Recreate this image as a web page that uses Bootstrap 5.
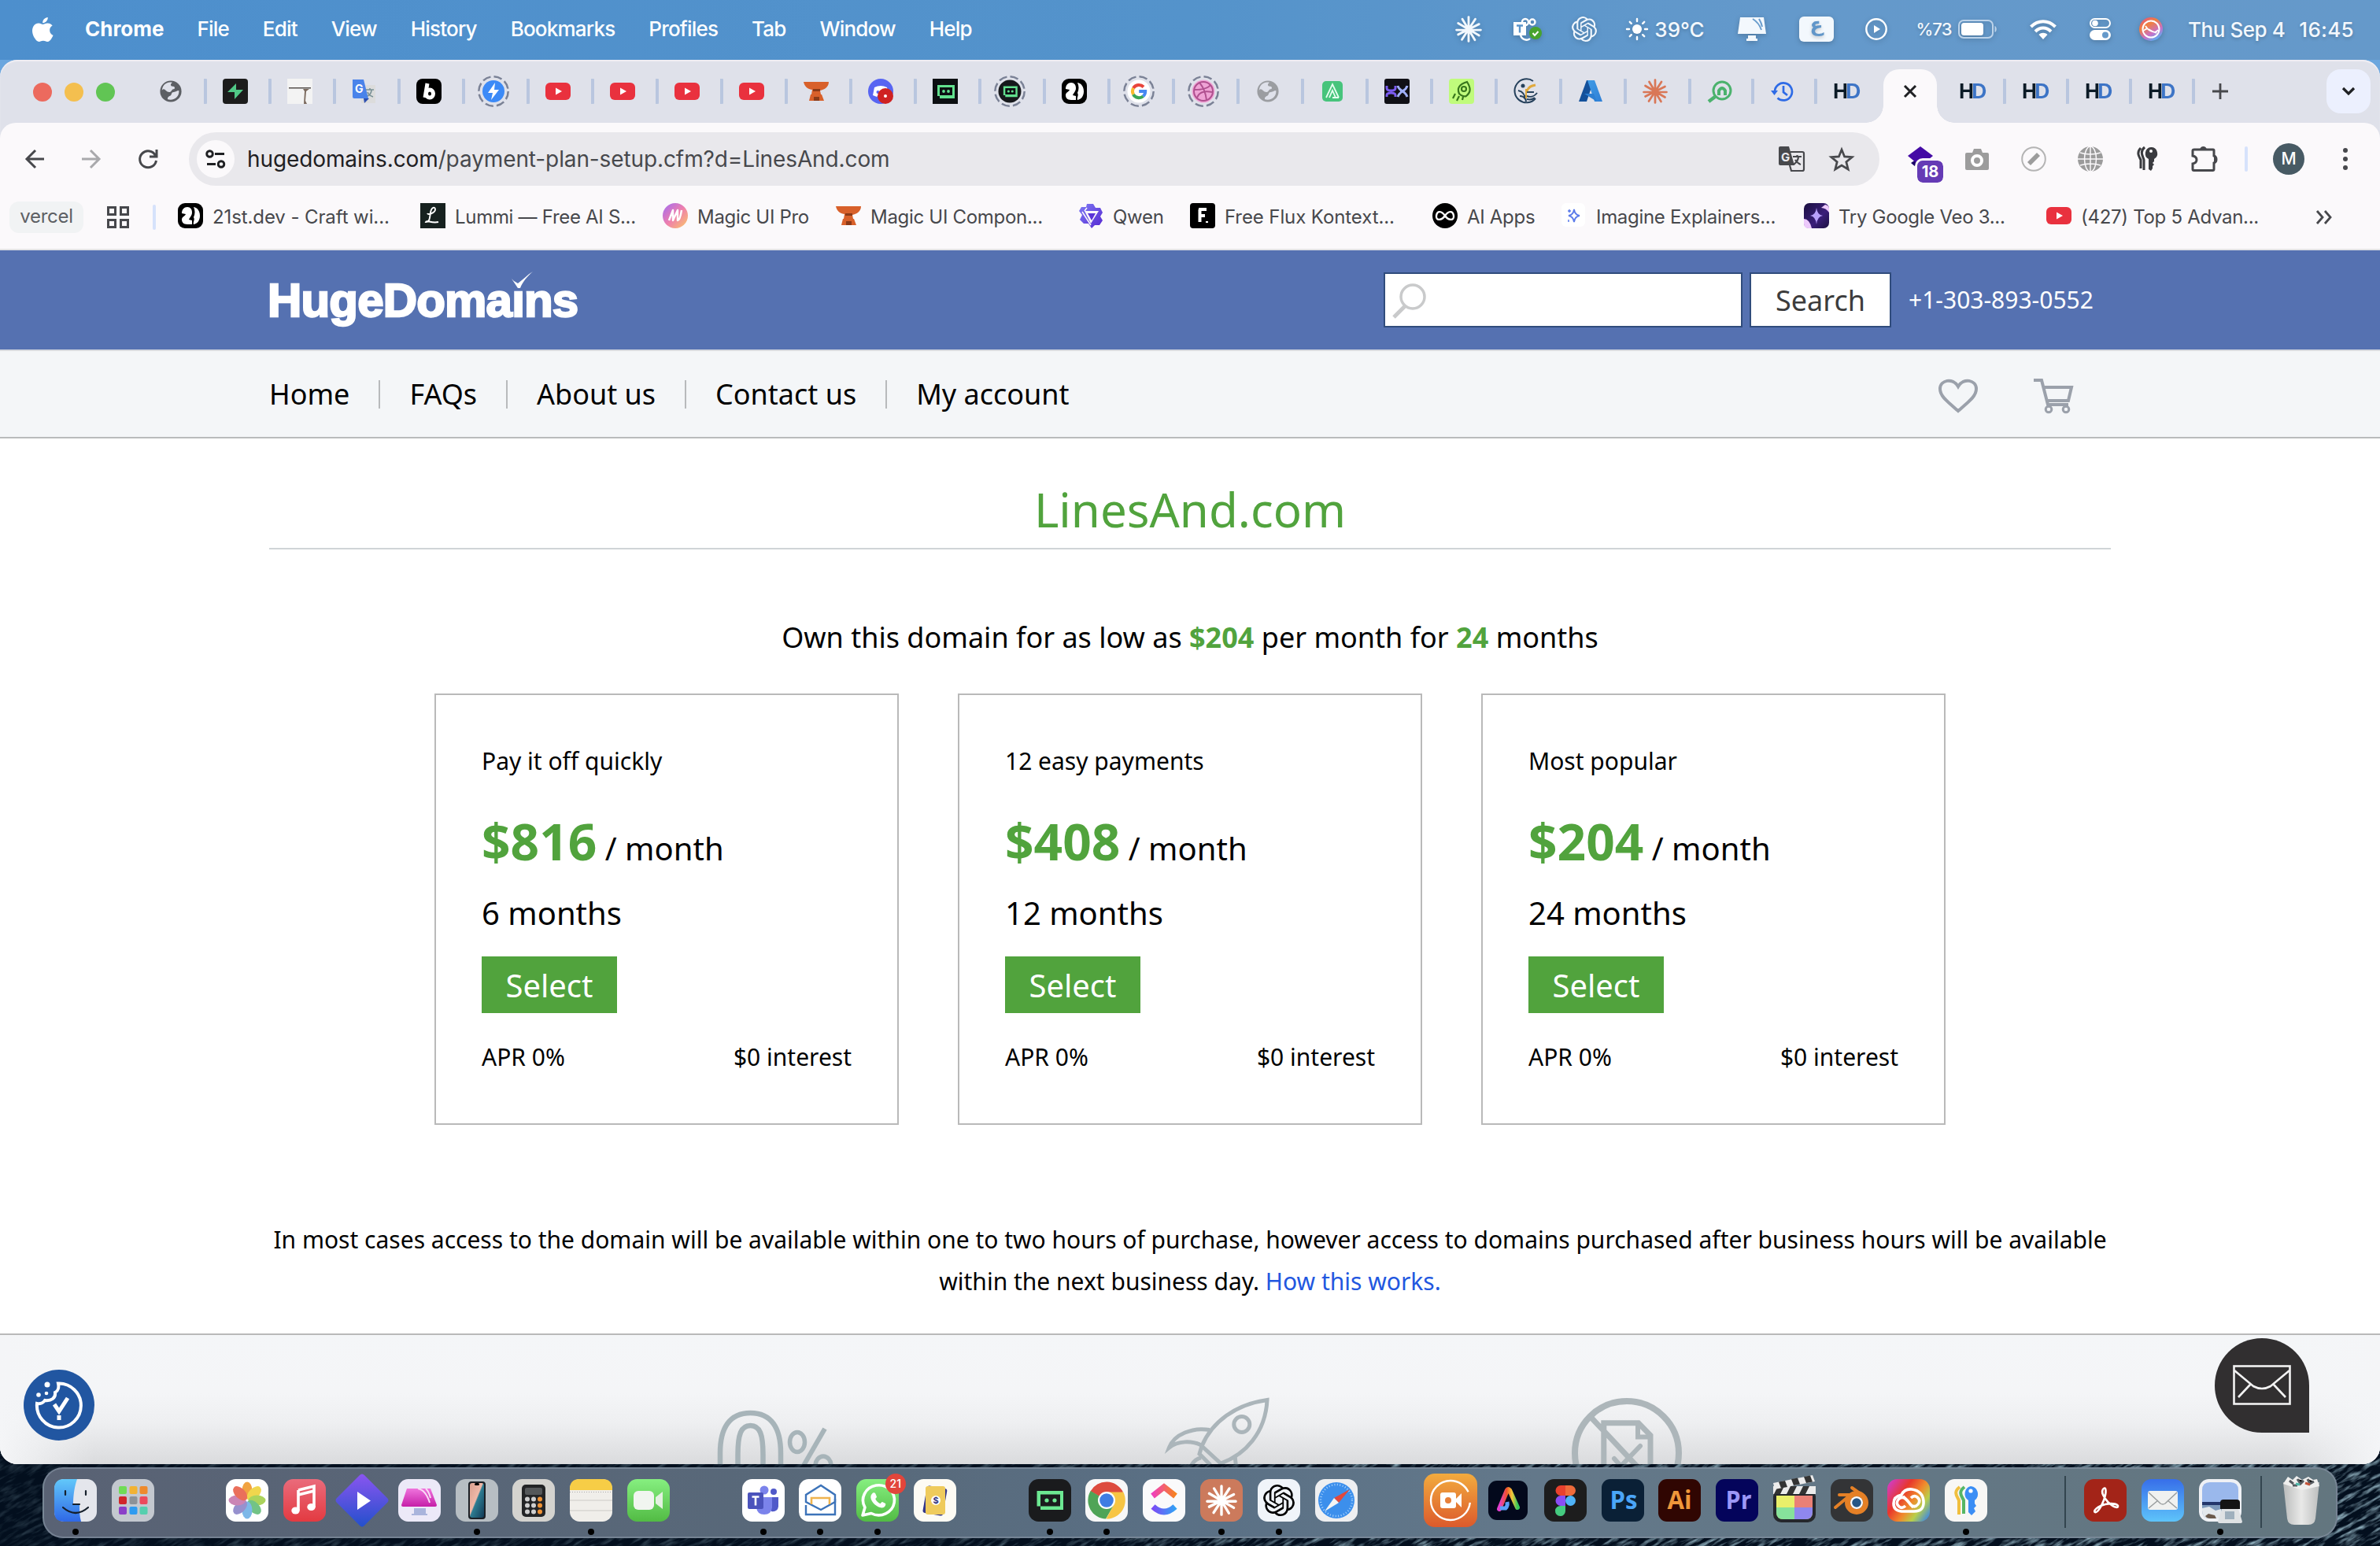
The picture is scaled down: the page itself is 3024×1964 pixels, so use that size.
<!DOCTYPE html>
<html lang="en">
<head>
<meta charset="utf-8">
<title>HugeDomains - Payment plan</title>
<meta name="viewport" content="width=device-width, initial-scale=1">
<link rel="stylesheet" href="https://cdn.jsdelivr.net/npm/bootstrap@5.3.0/dist/css/bootstrap.min.css">
<style>
body{width:3024px;height:1964px;overflow:hidden;font-family:Inter,"Liberation Sans",sans-serif;color:#000;background:#030c18}
svg{display:block;overflow:visible;flex:none}
.desk{position:absolute;inset:0;width:3024px;height:1964px;z-index:-1}
/* system menu bar */
.sysbar{height:76px;padding-left:41px;padding-right:19px;padding-bottom:2px;background:linear-gradient(90deg,#4d8fcd,#5493cb 50%,#6499cb 75%,#6599ca);color:#fff;font-size:26px}
.sysmenu{gap:42.9px;margin-left:41px;line-height:74px;letter-spacing:-.8px}
.sysmenu .fw-bold{letter-spacing:0;margin-right:-1px}
.status{display:grid;grid-template-columns:72px 78px 66px 140px 80px 84px 68px 138px 80px 64px 66px 239px;align-items:center;justify-items:center;color:#f3f8fd;text-shadow:0 2px 4px #0003}
.status svg{filter:drop-shadow(0 2px 3px #0003)}
.pct{font-size:22px;letter-spacing:-.9px;margin-left:-2px}
.date{letter-spacing:-.45px}
.clock{letter-spacing:.3px;margin-left:18px}
/* browser frame */
.browser{height:1784px;border-radius:22px;overflow:hidden;background:#dfe1ea;box-shadow:inset 0 2px 1px #f0eef4}
.strip{height:80px}
.lights{gap:16px;padding-left:42px;width:181px;padding-top:2px}
.lights i{width:24px;height:24px;border-radius:50%;background:#ec6a5e}
.lights i:nth-child(2){background:#f4bf4f}
.lights i:nth-child(3){background:#61c554}
.tb{width:82px;height:32px;border-right:4px solid #b9c6df;padding-right:7px;border-radius:1px}
.tb.n{width:80px;padding-right:4px}
.tb.nb{border-color:transparent}
.plus{margin-left:22px}
.active-tab{width:68px;height:68px;margin:12px 8px 0 4px;background:#fbf9fb;border-radius:20px 20px 0 0;position:relative}
.active-tab svg{margin-top:-12px}
.active-tab::before,.active-tab::after{content:"";position:absolute;bottom:0;width:22px;height:22px}
.active-tab::before{right:100%;background:radial-gradient(circle at 0 0,transparent 21.5px,#fbf9fb 22px)}
.active-tab::after{left:100%;background:radial-gradient(circle at 100% 0,transparent 21.5px,#fbf9fb 22px)}
.hd{font:700 28px/32px "Liberation Sans",sans-serif;letter-spacing:-3px;color:#0b1a26;transform:scaleX(.94)}
.hd b{color:#3d74c6}
.claude{color:#d97757}
.drop{width:56px;height:56px;border-radius:18px;background:#ecf0fe;margin-right:12px}
.toolbar-a{height:92px;background:#fbf9fb;border-radius:20px 20px 0 0}
.navbtns{width:240px;padding-left:8px}
.navbtns>span{width:72px;display:flex;justify-content:center}
.omni{width:2148px;height:68px;border-radius:34px;background:#e9e8ec;padding:0 32px 0 10px;font-size:28px;color:#47484c}
.omni .site{width:48px;height:48px;border-radius:50%;background:#fbf9fb;margin-right:16px}
.url{letter-spacing:-.11px}
.url b{color:#1f2023;font-weight:400}
.fav{margin-left:31px}
.exts{margin-left:16px}
.exts>span{width:72px;display:flex;justify-content:center;position:relative}
.exts .sp{width:36px}
.vline{width:4px;height:32px;border-radius:2px;background:#d6e2fb}
.pill18{left:32px;top:18px;width:33px;height:28px;border-radius:7px;background:#653bb5;color:#fff;font:700 20px/28px Inter,sans-serif;text-align:center;outline:3px solid #fbf9fb}
.ava{width:40px;height:40px;border-radius:50%;background:#475a64;color:#fff;font-size:21px;line-height:40px;text-align:center}
.marks{height:68px;background:#fbf9fb;padding:0 0 12px 12px;font-size:24px;color:#47484c;letter-spacing:-.3px}
.marks .vline{margin:0 28px 0 30px}
.chip{width:94px;height:40px;border-radius:12px;background:#f1f3f4;color:#5d6064;line-height:38px;text-align:center;margin-right:30px}
.bk{width:308px;gap:12px}
.bk.s220{width:220px}.bk.s142{width:142px}.bk.s164{width:164px}
.bk.wide1{letter-spacing:-.1px}
.more{margin-left:34px}
.edge{height:2px;background:#e4e4e6}
/* site */
.site-page{font-family:"Noto Sans","Open Sans",sans-serif;background:#fff;height:1542px;position:relative;overflow:hidden}
.wrap{width:2340px;margin:0 auto}
.bluebar{height:126px;background:#5571b1}
.logo{font:700 60px/60px "Liberation Sans",sans-serif;color:#fff;-webkit-text-stroke:2.4px #fff;letter-spacing:-.82px;position:relative;top:1px;left:-2px}
.logo svg{position:absolute;left:310px;top:-7px}
.sbox{width:456px;height:70px;border:2px solid #304c7c;background:#fff;border-radius:0;padding:12px 10px;margin-right:9px}
.sbtn,.sbtn:hover{width:180px;height:70px;border:2px solid #304c7c;background:#fff;border-radius:0;color:#3c3c3c;font-size:36px;line-height:54px;padding:7px 0 5px;margin-right:22px}
.phone{font-size:30px;width:257px;color:#fff;line-height:54px}
.graynav{height:113px;border-top:2px solid #d8dadf;border-bottom:2px solid #b9bbbc;background:#f4f6f8}
.graynav a{font-size:36px;line-height:54px;color:#000;text-decoration:none}
.graynav i{width:2px;height:36px;background:#b8babc;margin:0 37px}
.cart{margin:0 47px 0 71px}
.dom{font-size:60px;line-height:80px;font-weight:400;color:#51a33d;padding:50px 0 9px;margin:0;border-bottom:2px solid #d0d4d7}
.own{font-size:36px;line-height:54px;margin:85px 0 44px}
.gr{color:#51a33d}
.plans{gap:75px}
.plan{width:590px;height:548px;border:2px solid #b9b9b9;border-radius:0;padding:64px 58px 0}
.plan .lb{font-size:30px;line-height:40px}
.plan .pr{font-size:40px;line-height:80px;margin-top:42px;height:80px;white-space:pre}
.plan .pr b{font-size:64px;line-height:80px}
.plan .mo{font-size:40px;line-height:54px;margin-top:24px}
.plan .sel{width:172px;height:72px;border-radius:0;border:0;background:#51a33d;color:#fff;font-size:40px;line-height:54px;padding:10px 0 8px;margin-top:28px}
.plan .ap{font-size:30px;line-height:40px;margin-top:36px}
.note{font-size:30px;line-height:53px;margin:119px auto 40px}
.note a{color:#2257e0;text-decoration:none}
.feats{height:166px;border-top:2px solid #b9b9b9;background:linear-gradient(#f4f6f8 0,#f4f5f7 45%,#eeeff1 68%,#dadbdd 100%);padding:80px 0 0 905px;position:relative}
.feats::after{content:"";position:absolute;inset:0;background:linear-gradient(90deg,#f4f5f7 0,#f4f5f700 120px calc(100% - 120px),#f4f5f7)}
.rocket{margin-left:415px}
.nodoc{margin-left:380px}
.cookie{position:absolute;left:30px;bottom:30px;z-index:2}
.chat{position:absolute;right:90px;bottom:40px;width:120px;height:120px;border-radius:60px 60px 0 60px;background:#312f30;z-index:2}
.chat svg{margin-top:34px}
/* dock */
.dock{width:2916px;height:90px;margin:4px 0 0 54px;border:2px solid #8390a0b0;border-radius:26px;background:linear-gradient(90deg,#596274,#58697a 35%,#5a7085 50%,#63788a 65%,#63767f)}
.dk{width:72.8px;height:86px;position:relative;display:flex;align-items:center;justify-content:center;padding-bottom:6px}
.dk.f{margin-left:3.6px}
.dk.fc{padding-bottom:9px}
.dk.on::after{content:"";position:absolute;left:50%;margin-left:-4px;bottom:2px;width:8px;height:8px;border-radius:50%;background:#000}
.bdg{position:absolute;left:46px;top:6px;width:26px;height:26px;border-radius:50%;background:#e2453b;color:#fff;font-size:14px;line-height:26px;text-align:center}
.dsep{width:2px;height:66px;background:#33454f;margin:0 14px 2px 15px}
.dsep.wide{margin-left:88px}
</style>
<script src="https://cdn.jsdelivr.net/npm/bootstrap@5.3.0/dist/js/bootstrap.bundle.min.js"></script>
</head>
<body>
<!-- icon sprite -->
<svg width="0" height="0" class="position-absolute">
<defs>
<linearGradient id="gOr" x1="0" y1="0" x2="0" y2="1"><stop offset="0" stop-color="#f2ab3e"/><stop offset="1" stop-color="#dc5a2c"/></linearGradient>
<linearGradient id="gMu" x1="0" y1="0" x2="0" y2="1"><stop offset="0" stop-color="#ea6b7b"/><stop offset="1" stop-color="#e33a41"/></linearGradient>
<linearGradient id="gDi" x1="0" y1="0" x2="0" y2="1"><stop offset="0" stop-color="#8a55f0"/><stop offset="1" stop-color="#2450cc"/></linearGradient>
<linearGradient id="gGn" x1="0" y1="0" x2="0" y2="1"><stop offset="0" stop-color="#86ef80"/><stop offset="1" stop-color="#52bb44"/></linearGradient>
<linearGradient id="gBl" x1="0" y1="0" x2="0" y2="1"><stop offset="0" stop-color="#376ee9"/><stop offset="1" stop-color="#5ec4fa"/></linearGradient>
<linearGradient id="gFi" x1="0" y1="0" x2="0" y2="1"><stop offset="0" stop-color="#62c8fa"/><stop offset="1" stop-color="#2f68e6"/></linearGradient>
<linearGradient id="gPk" x1="0" y1="0" x2="0" y2="1"><stop offset="0" stop-color="#ef74dd"/><stop offset="1" stop-color="#c51ea8"/></linearGradient>
<linearGradient id="gPh" x1="0" y1="0" x2="1" y2="1"><stop offset="0" stop-color="#d9a08f"/><stop offset=".45" stop-color="#f0b9a8"/><stop offset=".5" stop-color="#2e7d92"/><stop offset="1" stop-color="#123a56"/></linearGradient>
<linearGradient id="gMg" x1="0" y1="0" x2="1" y2="1"><stop offset="0" stop-color="#a06bf5"/><stop offset=".5" stop-color="#ee7fae"/><stop offset="1" stop-color="#fbc866"/></linearGradient>
<linearGradient id="gCc" x1="0" y1=".2" x2="1" y2=".9"><stop offset="0" stop-color="#d43bb4"/><stop offset=".3" stop-color="#e8372c"/><stop offset=".55" stop-color="#f08a2c"/><stop offset=".75" stop-color="#b8cf4a"/><stop offset="1" stop-color="#3a86e8"/></linearGradient>
<linearGradient id="gCu" x1="0" y1="0" x2="1" y2="0"><stop offset="0" stop-color="#ef3fbd"/><stop offset="1" stop-color="#f7831f"/></linearGradient>
<linearGradient id="gCd" x1="0" y1="0" x2="1" y2="0"><stop offset="0" stop-color="#7a4cf6"/><stop offset="1" stop-color="#33a1f5"/></linearGradient>
<linearGradient id="gVe" x1="0" y1="0" x2="1" y2="1"><stop offset="0" stop-color="#1a0f3f"/><stop offset=".6" stop-color="#3b1f7a"/><stop offset="1" stop-color="#1b1040"/></linearGradient>
<linearGradient id="gSi" x1=".1" y1="0" x2=".7" y2="1"><stop offset="0" stop-color="#e0508a"/><stop offset=".35" stop-color="#f0803e"/><stop offset=".7" stop-color="#c870c8"/><stop offset="1" stop-color="#4fb3f5"/></linearGradient>
<linearGradient id="gQw" x1="0" y1="0" x2="1" y2="1"><stop offset="0" stop-color="#7f7cf5"/><stop offset="1" stop-color="#5526d0"/></linearGradient>
<linearGradient id="gAz" x1="0" y1="0" x2="1" y2="1"><stop offset="0" stop-color="#3f9be6"/><stop offset="1" stop-color="#2f7fd6"/></linearGradient>
<linearGradient id="gAe" x1="0" y1="0" x2="1" y2="0"><stop offset="0" stop-color="#e23fd2"/><stop offset=".4" stop-color="#f0502c"/><stop offset=".7" stop-color="#f4c83a"/><stop offset="1" stop-color="#38c85a"/></linearGradient>
<linearGradient id="gTr" x1="0" y1="0" x2="1" y2="0"><stop offset="0" stop-color="#b9bbbb"/><stop offset=".5" stop-color="#e9e9e8"/><stop offset="1" stop-color="#bcbebe"/></linearGradient>
<symbol id="globe" viewBox="0 0 32 32"><circle cx="16" cy="16" r="14.500"/><path d="M4 16c0-2 1-3 2-3 3 0 4 4 8 4 3 0 3-3 5-4 2 0 3-1 2-3-2-1-5 0-5-3 0-1 1-2 2-3C10 2 4 8 4 16zM12 27c-1-3 1-4 3-5 3-1 1-5 5-5 3 0 4-2 7-2 1 8-6 14-15 12z" fill="#dfe1ea"/></symbol>
<symbol id="yt" viewBox="0 0 32 32"><rect y="5" width="32" height="22" rx="6" fill="#e9313e"/><path d="M13 11.500v9l8-4.500z" fill="#fff"/></symbol>
<symbol id="anvil" viewBox="0 0 32 32"><path d="M0 4h32c0 7-6 10-11 11l1 5h-12l1-6C4 13 1 9 0 4z" fill="#d8602a"/><path d="M9 20h14l3 8H7z" fill="#d8602a"/><path d="M12 13h9v3h-9zM13 23h7v5h-7z" fill="#8a3a18"/></symbol>
<symbol id="t21" viewBox="0 0 32 32"><rect width="32" height="32" rx="9"/><path d="M5 13c0-5 3-8 7-8s6 3 6 7-3 6-4 9l4 1v5h-6c-5 0-7-3-7-6 0-4 4-4 5-7zM20 5c5 1 8 5 8 11s-3 10-8 11c-1-3 2-6 0-9 2-4 2-9 0-13z" fill="#fff"/></symbol>
<symbol id="bot" viewBox="0 0 32 32"><path d="M6 8h22v17H9v-3H6z" fill="#62e08e"/><path d="M9 11h16v10H9z" fill="#0c0f12"/><circle cx="14" cy="16" r="1.900" fill="#62e08e"/><circle cx="20" cy="16" r="1.900" fill="#62e08e"/></symbol>
<symbol id="ring" viewBox="0 0 40 40"><circle cx="20" cy="20" r="18.700" fill="none" stroke="#7b8296" stroke-width="2.500" stroke-dasharray="10.500 4.180"/></symbol>
<symbol id="star12" viewBox="0 0 32 32"><g stroke="currentColor" stroke-width="2.700" stroke-linecap="round"><path d="M16 1.500v29M1.500 17h29M8.500 4l15 25M24 4L8 28.500M3.500 9l25 14.500M28.500 10L3.500 22.500"/></g></symbol>
<symbol id="oai" viewBox="0 0 24 24"><path fill="currentColor" d="M22.2819 9.8211a5.9847 5.9847 0 0 0-.5157-4.9108 6.0462 6.0462 0 0 0-6.5098-2.9A6.0651 6.0651 0 0 0 4.9807 4.1818a5.9847 5.9847 0 0 0-3.9977 2.9 6.0462 6.0462 0 0 0 .7427 7.0966 5.98 5.98 0 0 0 .511 4.9107 6.051 6.051 0 0 0 6.5146 2.9001A5.9847 5.9847 0 0 0 13.2599 24a6.0557 6.0557 0 0 0 5.7718-4.2058 5.9894 5.9894 0 0 0 3.9977-2.9001 6.0557 6.0557 0 0 0-.7475-7.0729zm-9.022 12.6081a4.4755 4.4755 0 0 1-2.8764-1.0408l.1419-.0804 4.7783-2.7582a.7948.7948 0 0 0 .3927-.6813v-6.7369l2.02 1.1686a.071.071 0 0 1 .038.052v5.5826a4.504 4.504 0 0 1-4.4945 4.4944zm-9.6607-4.1254a4.4708 4.4708 0 0 1-.5346-3.0137l.142.0852 4.783 2.7582a.7712.7712 0 0 0 .7806 0l5.8428-3.3685v2.3324a.0804.0804 0 0 1-.0332.0615L9.74 19.9502a4.4992 4.4992 0 0 1-6.1408-1.6464zM2.3408 7.8956a4.485 4.485 0 0 1 2.3655-1.9728V11.6a.7664.7664 0 0 0 .3879.6765l5.8144 3.3543-2.0201 1.1685a.0757.0757 0 0 1-.071 0l-4.8303-2.7865A4.504 4.504 0 0 1 2.3408 7.872zm16.5963 3.8558L13.1038 8.364 15.1192 7.2a.0757.0757 0 0 1 .071 0l4.8303 2.7913a4.4944 4.4944 0 0 1-.6765 8.1042v-5.6772a.79.79 0 0 0-.407-.667zm2.0107-3.0231l-.142-.0852-4.7735-2.7818a.7759.7759 0 0 0-.7854 0L9.409 9.2297V6.8974a.0662.0662 0 0 1 .0284-.0615l4.8303-2.7866a4.4992 4.4992 0 0 1 6.6802 4.66zM8.3065 12.863l-2.02-1.1638a.0804.0804 0 0 1-.038-.0567V6.0742a4.4992 4.4992 0 0 1 7.3757-3.4537l-.142.0805L8.704 5.459a.7948.7948 0 0 0-.3927.6813zm1.0976-2.3654l2.602-1.4998 2.6069 1.4998v2.9994l-2.5974 1.4997-2.6067-1.4997Z"/></symbol>
</defs>
</svg>
<!-- wallpaper -->
<svg class="desk" viewBox="0 0 3024 1964">
<defs><filter id="sea" x="0" y="0" width="100%" height="100%"><feTurbulence type="fractalNoise" baseFrequency=".045 .22" numOctaves="3" seed="4"/><feColorMatrix values="0 0 0 0 .36  0 0 0 0 .55  0 0 0 0 .64  2.6 0 0 0 -1.150"/></filter>
<linearGradient id="seaMask"><stop offset="0" stop-color="#333"/><stop offset=".4" stop-color="#555"/><stop offset=".6" stop-color="#ccc"/><stop offset="1" stop-color="#ddd"/></linearGradient><mask id="sm"><rect y="1800" width="3024" height="164" fill="url(#seaMask)"/></mask></defs>
<rect width="3024" height="1964" fill="#030f1e"/><rect width="3024" height="140" fill="#6ba6de"/>
<g mask="url(#sm)"><g transform="rotate(-28 1512 1900)"><rect x="-100" y="1000" width="3300" height="1800" filter="url(#sea)"/></g></g>
</svg>

<header class="sysbar d-flex align-items-center justify-content-between">
 <div class="d-flex align-items-center">
  <svg width="26" height="31" viewBox="2.200 0 19.200 24" preserveAspectRatio="none" fill="#fff"><path d="M12.152 6.896c-.948 0-2.415-1.078-3.96-1.04-2.04.027-3.91 1.183-4.961 3.014-2.117 3.675-.546 9.103 1.519 12.09 1.013 1.454 2.208 3.09 3.792 3.039 1.52-.065 2.09-.987 3.935-.987 1.831 0 2.35.987 3.96.948 1.637-.026 2.676-1.48 3.676-2.948 1.156-1.688 1.636-3.325 1.662-3.415-.039-.013-3.182-1.221-3.22-4.857-.026-3.04 2.48-4.494 2.597-4.559-1.429-2.09-3.623-2.324-4.39-2.376-2-.156-3.675 1.09-4.61 1.09zM15.53 3.83c.843-1.012 1.4-2.427 1.245-3.83-1.207.052-2.662.805-3.532 1.818-.78.896-1.454 2.338-1.273 3.714 1.338.104 2.715-.688 3.559-1.701"/></svg>
  <nav class="sysmenu d-flex fw-medium"><span class="fw-bold">Chrome</span><span>File</span><span>Edit</span><span>View</span><span>History</span><span>Bookmarks</span><span>Profiles</span><span>Tab</span><span>Window</span><span>Help</span></nav>
 </div>
 <div class="status fw-medium">
  <svg width="34" height="34"><use href="#star12"/></svg>
  <svg width="38" height="32" viewBox="0 0 38 32"><g fill="none" stroke="#fff" stroke-width="2.400"><circle cx="16" cy="7" r="4"/><circle cx="25" cy="7" r="3.500"/><path d="M10 22c0 8 9 9 12 6"/></g><rect x="1" y="7" width="16" height="17" fill="#fff"/><path d="M5 11.500h8M9 11.500v9" stroke="#5b95cb" stroke-width="2.400"/><circle cx="29" cy="21" r="8" fill="#47a32e"/><path d="M25.500 21l2.500 3 4.500-5" fill="none" stroke="#fff" stroke-width="2"/></svg>
  <svg width="32" height="32"><use href="#oai"/></svg>
  <span class="d-flex align-items-center"><svg width="28" height="28" viewBox="0 0 28 28" class="me-2"><circle cx="14" cy="14" r="6" fill="#fff"/><path d="M14 1v3M14 24v3M1 14h3M24 14h3M4.800 4.800l2 2M21.200 21.200l2 2M4.800 23.200l2-2M21.200 6.800l2-2" stroke="#fff" stroke-width="2.400" stroke-linecap="round"/></svg><span>39°C</span></span>
  <svg width="38" height="30" viewBox="0 0 38 30"><path d="M4 0h30l3 21H1zM14 23h10v4h2v3H12v-3h2z" fill="#f3f8fd"/><path d="M20 2q8 5 11 14M28 2q3 5 4 10" fill="none" stroke="#6a9dcd" stroke-width="2"/></svg>
  <svg width="44" height="32" viewBox="0 0 44 32"><rect width="44" height="32" rx="6" fill="#f3f8fd"/><text x="22" y="19" font-size="25" font-weight="700" text-anchor="middle" fill="#6196c9" font-family="DejaVu Sans">ع</text></svg>
  <svg width="28" height="28" viewBox="0 0 28 28"><circle cx="14" cy="14" r="12.700" fill="none" stroke="#fff" stroke-width="2.400"/><path d="M11 9v10l8-5z" fill="#fff"/></svg>
  <span class="d-flex align-items-center"><span class="pct">%73</span><svg width="50" height="24" viewBox="0 0 50 24" class="ms-2"><rect x="1" y="1" width="43" height="22" rx="6" fill="none" stroke="#bcd3ea" stroke-width="2"/><rect x="4" y="4" width="28" height="16" rx="3.500" fill="#fff"/><path d="M46.500 8c3 1 3 7 0 8z" fill="#bcd3ea"/></svg></span>
  <svg width="34" height="25" viewBox="0 0 34 25"><g fill="none" stroke="#fff" stroke-width="4"><path d="M1.500 9c9-9 22-9 31 0M7 15c6-6 14-6 20 0"/></g><path d="M11.500 19c3-3 8-3 11 0L17 25z" fill="#fff"/></svg>
  <svg width="27" height="28" viewBox="0 0 27 28"><rect x="1" y="1" width="25" height="11" rx="5.500" fill="none" stroke="#fff" stroke-width="2"/><circle cx="7" cy="6.500" r="3.800" fill="#fff"/><rect y="15" width="27" height="13" rx="6.500" fill="#fff"/><circle cx="20" cy="21.500" r="4" fill="#6599ca"/></svg>
  <svg width="30" height="30" viewBox="0 0 30 30"><circle cx="15" cy="15" r="15" fill="url(#gSi)"/><circle cx="15" cy="15" r="10.500" fill="none" stroke="#fff" stroke-width="2"/><path d="M6 17c6-8 12 8 18-1M8 11c5 8 8 6 14 9" fill="none" stroke="#fff" stroke-width="1.800"/></svg>
  <span class="d-flex"><span class="date">Thu Sep 4</span><span class="clock">16:45</span></span>
 </div>
</header>

<main class="browser">
 <div class="strip d-flex align-items-center">
  <div class="lights d-flex"><i></i><i></i><i></i></div>
  <div class="tb d-flex justify-content-center"><svg width="30" height="32" fill="#5c5f64"><use href="#globe"/></svg></div>
  <div class="tb d-flex justify-content-center"><svg width="32" height="32" viewBox="0 0 32 32"><rect width="32" height="32" rx="4" fill="#1c1c1c"/><path d="M17 6v8h9L15 26v-9H6z" fill="#50c886"/></svg></div>
  <div class="tb d-flex justify-content-center"><svg width="32" height="32" viewBox="0 0 32 32"><path fill="#f3f3f3" d="M0 0h32v32H0z"/><path d="M2 11h28v1.500H2z" fill="#55504c"/><path d="M20 13h8l-4 3-1 12 2 4h-4l1-16z" fill="#7b6a5e"/></svg></div>
  <div class="tb d-flex justify-content-center"><svg width="32" height="32" viewBox="0 0 32 32"><rect x="12" y="8" width="18" height="23" fill="#dcdcdc"/><path d="M1 1h14l6 24H3q-2 0-2-2z" fill="#4a83ea"/><path d="M15 25h7l-6 6z" fill="#2d4fb0"/><text x="4" y="18" font-size="14" font-weight="700" fill="#fff" font-family="Inter">G</text><path d="M18 14h10M23 12v2M20 22c4-2 5-5 5-8M20 17c1 3 4 5 7 6" stroke="#7a9196" stroke-width="1.600" fill="none"/></svg></div>
  <div class="tb d-flex justify-content-center"><svg width="32" height="32" viewBox="0 0 32 32"><rect width="32" height="32" rx="8"/><path d="M14 6l-3 18" stroke="#fff" stroke-width="5"/><ellipse cx="17" cy="19" rx="4.500" ry="5" fill="none" stroke="#fff" stroke-width="5"/></svg></div>
  <div class="tb d-flex justify-content-center align-items-center"><svg width="40" height="40" viewBox="0 0 40 40"><use href="#ring"/><circle cx="20" cy="20" r="14" fill="#3c8af7"/><path d="M22 9l-9 13h6l-2 9 10-13h-6z" fill="#fff"/></svg></div>
  <div class="tb d-flex justify-content-center"><svg width="32" height="32"><use href="#yt"/></svg></div>
  <div class="tb d-flex justify-content-center"><svg width="32" height="32"><use href="#yt"/></svg></div>
  <div class="tb d-flex justify-content-center"><svg width="32" height="32"><use href="#yt"/></svg></div>
  <div class="tb d-flex justify-content-center"><svg width="32" height="32"><use href="#yt"/></svg></div>
  <div class="tb d-flex justify-content-center"><svg width="32" height="32"><use href="#anvil"/></svg></div>
  <div class="tb d-flex justify-content-center"><svg width="32" height="32" viewBox="0 0 32 32"><circle cx="16" cy="16" r="16" fill="#5865f2"/><path d="M8 11q8-4 16 0l2 10-5 2-2-2h-6l-2 2-5-2z" fill="#fff"/><circle cx="12.500" cy="17" r="2" fill="#5865f2"/><circle cx="22" cy="22" r="10" fill="#cf2222"/><circle cx="22" cy="22" r="2" fill="#fff"/></svg></div>
  <div class="tb d-flex justify-content-center"><svg width="32" height="32"><rect width="32" height="32" fill="#0c0f12"/><use href="#bot"/></svg></div>
  <div class="tb d-flex justify-content-center align-items-center"><svg width="40" height="40" viewBox="0 0 40 40"><use href="#ring"/><circle cx="20" cy="20" r="14.500" fill="#16181b"/><use href="#bot" x="7" y="7" width="26" height="26"/></svg></div>
  <div class="tb d-flex justify-content-center"><svg width="32" height="32"><use href="#t21"/></svg></div>
  <div class="tb d-flex justify-content-center align-items-center"><svg width="40" height="40" viewBox="0 0 40 40"><use href="#ring"/><circle cx="20" cy="20" r="14.500" fill="#fff"/><g fill="none" stroke-width="4"><path d="M26 14.500a8.200 8.200 0 0 0-13 1.500" stroke="#e8453c"/><path d="M13 16a8.200 8.200 0 0 0 0 8" stroke="#f9bb2d"/><path d="M13 24a8.200 8.200 0 0 0 12.500 2.200" stroke="#3aa757"/><path d="M25.500 26.200a8.200 8.200 0 0 0 2.700-6.200h-8" stroke="#4688f1"/></g></svg></div>
  <div class="tb d-flex justify-content-center align-items-center"><svg width="40" height="40" viewBox="0 0 40 40"><use href="#ring"/><circle cx="20" cy="20" r="14.500" fill="#efa3d5"/><g fill="none" stroke="#b0508f" stroke-width="2"><circle cx="20" cy="20" r="12"/><path d="M9 18c9 0 17-2 20-6M15 9c6 7 8 14 9 22M12 28c3-8 10-9 19-7"/></g></svg></div>
  <div class="tb d-flex justify-content-center"><svg width="30" height="32" fill="#9b9da1"><use href="#globe"/></svg></div>
  <div class="tb d-flex justify-content-center"><svg width="32" height="32" viewBox="0 0 32 32"><rect x="3" y="3" width="26" height="26" rx="5" fill="#47c47c"/><path d="M8 24l8-17 8 17M12 24l4-9 4 9M16 24h8" fill="none" stroke="#e7fff0" stroke-width="1.800"/></svg></div>
  <div class="tb d-flex justify-content-center"><svg width="32" height="32" viewBox="0 0 32 32"><rect width="32" height="32" rx="3" fill="#101016"/><g fill="none" stroke-width="3"><path d="M3 9v3q0 3 5.500 3t5.500-3V9M3 23v-2q0-3 5.500-3t5.500 3v2" stroke="#7b5cf0"/><path d="M17 9c2 8 9 5 12 14M29 9c-2 8-9 5-12 14" stroke="#9fb0f8"/></g></svg></div>
  <div class="tb d-flex justify-content-center"><svg width="32" height="32" viewBox="0 0 32 32"><rect width="32" height="32" rx="4" fill="#c0fb7c"/><g fill="none" stroke="#38761d" stroke-width="2.200"><path d="M13 19c-3-7 0-12 10-15 5 8 5 13-1 18-2 1-6 0-9-3z"/><circle cx="19" cy="13" r="3"/><path d="M8 19l-3 6M13 22l-3 6M18 23l-1 4"/></g></svg></div>
  <div class="tb d-flex justify-content-center"><svg width="32" height="32" viewBox="0 0 32 32"><g fill="none" stroke="#26415c" stroke-width="2"><path d="M25 3A15 15 0 1 0 28 25"/><path d="M6 15c6 1 9 5 10 14M8 22c3 0 6 2 7 4M17 22c5 2 10 0 13-4M17 17h9M17 26c5 1 8 0 10-2"/><path d="M16 13v12" stroke="#e0a93c"/><path d="M17 16c2-6 6-7 11-8" stroke="#e0a93c" stroke-width="3"/></g><circle cx="12" cy="9" r="2.500" fill="#26415c"/></svg></div>
  <div class="tb d-flex justify-content-center"><svg width="32" height="32" viewBox="0 0 32 32"><path d="M11 2h9L11 29H1z" fill="#14519b"/><path d="M12 2h9l10 27H21z" fill="url(#gAz)"/><path d="M8 19h12l4 10z" fill="#2c7fd3"/></svg></div>
  <div class="tb claude d-flex justify-content-center"><svg width="32" height="32"><use href="#star12"/></svg></div>
  <div class="tb n d-flex justify-content-center"><svg width="32" height="32" viewBox="0 0 32 32" fill="none" stroke="#4bb26d"><circle cx="19" cy="15" r="11" stroke-width="3"/><path d="M10 23l-8 6" stroke-width="4.500"/><path d="M15 21v-6q4-6 8 0v6" stroke-width="4"/></svg></div>
  <div class="tb n d-flex justify-content-center"><svg width="32" height="32" viewBox="0 0 32 32" fill="none" stroke="#2e6be6" stroke-width="2.700"><path d="M6 16a11 11 0 1 1 3.500 8.500M17 9v8l5 4"/><path d="M1 15h9l-4.500 6z" fill="#2e6be6" stroke="none"/></svg></div>
  <div class="tb n nb d-flex justify-content-center"><span class="hd">H<b>D</b></span></div>
  <div class="active-tab d-flex align-items-center justify-content-center"><svg width="16" height="16" viewBox="0 0 16 16"><path d="M1 1l14 14M15 1L1 15" stroke="#1f2023" stroke-width="3"/></svg></div>
  <div class="tb n d-flex justify-content-center"><span class="hd">H<b>D</b></span></div>
  <div class="tb n d-flex justify-content-center"><span class="hd">H<b>D</b></span></div>
  <div class="tb n d-flex justify-content-center"><span class="hd">H<b>D</b></span></div>
  <div class="tb n d-flex justify-content-center"><span class="hd">H<b>D</b></span></div>
  <svg width="20" height="20" viewBox="0 0 20 20" class="plus"><path d="M10 0v20M0 10h20" stroke="#47484c" stroke-width="2.800"/></svg>
  <div class="drop ms-auto d-flex align-items-center justify-content-center"><svg width="18" height="12" viewBox="0 0 18 12"><path d="M2 2l7 7 7-7" fill="none" stroke="#1f2023" stroke-width="3.200"/></svg></div>
 </div>
 <div class="toolbar-a d-flex align-items-center">
  <div class="navbtns d-flex align-items-center">
   <span><svg width="24" height="24" viewBox="0 0 24 24" fill="none" stroke="#47484c" stroke-width="3"><path d="M24 12H2M13 1L2 12l11 11"/></svg></span>
   <span><svg width="24" height="24" viewBox="0 0 24 24" fill="none" stroke="#a9a9ac" stroke-width="3"><path d="M0 12h22M11 1l11 11-11 11"/></svg></span>
   <span><svg width="26" height="24" viewBox="0 0 26 24" fill="none" stroke="#47484c" stroke-width="3"><path d="M22.500 7.500A10.500 10.500 0 1 0 23.500 14M24 0v9h-9"/></svg></span>
  </div>
  <div class="omni d-flex align-items-center">
   <span class="site d-flex align-items-center justify-content-center"><svg width="26" height="24" viewBox="0 0 26 24" fill="none" stroke="#1f2023" stroke-width="2.900"><circle cx="5.500" cy="5.500" r="3.800"/><path d="M12 5.500h12M2 18.500h11"/><circle cx="20" cy="18.500" r="3.800"/></svg></span>
   <span class="url"><b>hugedomains.com</b>/payment-plan-setup.cfm?d=LinesAnd.com</span>
   <span class="ms-auto d-flex align-items-center">
    <svg width="34" height="34" viewBox="0 0 34 34"><path d="M3 1h11l7 24H3q-2 0-2-2V3q0-2 2-2z" fill="#47484c"/><text x="4" y="20" font-size="15" font-weight="700" fill="#e9e8ec" font-family="Inter">G</text><path d="M16 8h15q2 0 2 2v20q0 2-2 2H17l-2-7M19 14h11M24.500 12v2M20 24c4-3 6-6 6-10M22 18c2 3 4 5 7 6" fill="none" stroke="#47484c" stroke-width="2.200"/></svg>
    <svg width="32" height="31" viewBox="0 0 32 31" class="fav"><path d="M16 3l3.600 8.900 9.600.7-7.400 6.100 2.400 9.300L16 23l-8.200 5 2.400-9.300-7.400-6.100 9.600-.7z" fill="none" stroke="#47484c" stroke-width="2.700"/></svg>
   </span>
  </div>
  <div class="exts d-flex align-items-center">
   <span><svg width="32" height="32" viewBox="0 0 32 32"><path d="M4 21l12-8 12 8-12 10z" fill="#1b0068"/><path d="M16 0l16 12-16 13L0 12z" fill="#440ba5"/></svg><b class="pill18 position-absolute">18</b></span>
   <span><svg width="30" height="28" viewBox="0 0 30 28"><path d="M2 6h7l2-5h9l2 5h6q2 0 2 2v18q0 2-2 2H2q-2 0-2-2V8q0-2 2-2z" fill="#9c9c9c"/><circle cx="15" cy="16" r="6" fill="#9c9c9c" stroke="#fff" stroke-width="4"/></svg></span>
   <span><svg width="32" height="32" viewBox="0 0 32 32"><circle cx="16" cy="16" r="14.800" fill="none" stroke="#b4b4b4" stroke-width="2"/><path d="M8 20L20 8l4 4-12 12z" fill="#9c9c9c"/></svg></span>
   <span><svg width="32" height="32" viewBox="0 0 32 32"><circle cx="16" cy="16" r="16" fill="#9b9b9b"/><g fill="none" stroke="#fbf9fb" stroke-width="1.500"><ellipse cx="16" cy="16" rx="7.500" ry="16"/><path d="M16 0v32M0 16h32M3 8q13 4 26 0M3 24q13-4 26 0"/></g></svg></span>
   <span><svg width="26" height="32" viewBox="0 0 26 32" fill="#3a3b3f"><path d="M18 1a8 8 0 0 1 4 15v3l-2 2 2 2-2 2v3l-2 3-3-2V16a8 8 0 0 1 3-15z"/><circle cx="18" cy="6" r="2" fill="#fbf9fb"/><path d="M10 1C3 7 8 13 9 17v13M5 2C-1 8 3 13 5 17v11" fill="none" stroke="#3a3b3f" stroke-width="3"/></svg></span>
   <span><svg width="32" height="32" viewBox="0 0 32 32"><path d="M4 4h24q1 0 1 1v7q3 1 3 4.500T29 21v8q0 1.500-1.500 1.500h-24Q2 30.500 2 29v-7q5-1 5-5t-5-5V5.500Q2 4 4 4z" fill="none" stroke="#47484c" stroke-width="3"/><path d="M11 4q1-4 4.500-4T20 4zM29 12q4 1 4 4.500T29 21z" fill="#47484c"/></svg></span>
   <span class="sp"><i class="vline"></i></span>
   <span><b class="ava fw-medium">M</b></span>
   <span><svg width="6" height="28" viewBox="0 0 6 28" fill="#47484c"><circle cx="3" cy="3" r="3"/><circle cx="3" cy="14" r="3"/><circle cx="3" cy="25" r="3"/></svg></span>
  </div>
 </div>
 <div class="marks d-flex align-items-center text-nowrap">
  <span class="chip">vercel</span>
  <svg width="28" height="28" viewBox="0 0 28 28" fill="none" stroke="#47484c" stroke-width="3"><path d="M1.500 1.500h9v9h-9zM17.500 1.500h9v9h-9zM1.500 17.500h9v9h-9zM17.500 17.500h9v9h-9z"/></svg>
  <i class="vline"></i>
  <span class="bk wide1 d-flex"><svg width="32" height="32"><use href="#t21"/></svg><span>21st.dev - Craft wi...</span></span>
  <span class="bk d-flex"><svg width="32" height="32" viewBox="0 0 32 32"><path fill="#16211f" d="M0 0h32v32H0z"/><path d="M9 13c1 3 10-1 10-5s-5-3-6 4-1 12-6 12c1-3 7 2 16 0" fill="none" stroke="#fff" stroke-width="1.900"/></svg><span>Lummi — Free AI S...</span></span>
  <span class="bk s220 d-flex"><svg width="32" height="32" viewBox="0 0 32 32"><circle cx="16" cy="16" r="16" fill="url(#gMg)"/><path d="M8 22l5-13v13l6-13v13q3 0 5-13" fill="none" stroke="#fff" stroke-width="2.500" stroke-linejoin="round"/></svg><span>Magic UI Pro</span></span>
  <span class="bk d-flex"><svg width="32" height="32"><use href="#anvil"/></svg><span>Magic UI Compon...</span></span>
  <span class="bk s142 d-flex"><svg width="32" height="32" viewBox="0 0 32 32"><path d="M11 1h8l3 5h6l3 6-3 5 3 5-4 6h-6l-4 4-4-6H7l-5-5 3-6-4-5 3-5h6z" fill="url(#gQw)"/><path d="M8 10h18L16 26z" fill="#fbf9fb"/><path d="M12 13h10l-5 9z" fill="#5b34d8"/><path d="M5 11l11 17M11 6l-3 4" stroke="#fbf9fb" stroke-width="1.500"/></svg><span>Qwen</span></span>
  <span class="bk wide1 d-flex"><svg width="32" height="32" viewBox="0 0 32 32"><rect width="32" height="32" rx="4"/><path d="M11 8h10M12.500 8v16M11 16h8" stroke="#fff" stroke-width="4"/><path d="M20 23h3v2h-3z" fill="#fff"/></svg><span>Free Flux Kontext...</span></span>
  <span class="bk s164 d-flex"><svg width="32" height="32" viewBox="0 0 32 32"><circle cx="16" cy="16" r="16"/><path d="M16 16c-4-6-10-7-11 0s7 6 11 0 10-7 11 0-7 6-11 0z" fill="none" stroke="#fff" stroke-width="2.400"/></svg><span>AI Apps</span></span>
  <span class="bk d-flex"><svg width="32" height="32" viewBox="0 0 32 32"><rect width="30" height="30" rx="6" fill="#fff"/><path d="M16 8q1 7 7 8-6 1-7 8-1-7-7-8 6-1 7-8z" fill="none" stroke="#5b7bea" stroke-width="1.800"/><path d="M10 8v4M8 10h4M9 21v3" stroke="#5b7bea" stroke-width="1.500"/></svg><span>Imagine Explainers...</span></span>
  <span class="bk d-flex"><svg width="32" height="32" viewBox="0 0 32 32"><rect width="32" height="32" rx="7" fill="url(#gVe)"/><path d="M16 6q1 9 8 10-7 1-8 11-1-10-8-11 7-1 8-10z" fill="#b9a0fb"/><path d="M0 20q7 0 10 12H6q-6 0-6-6zM22 6q6 0 10 6V7q0-4-5-5z" fill="#ecc9fb"/></svg><span>Try Google Veo 3...</span></span>
  <span class="bk d-flex"><svg width="32" height="32"><use href="#yt"/></svg><span>(427) Top 5 Advan...</span></span>
  <svg width="22" height="18" viewBox="0 0 22 18" class="more"><path d="M2 1l7 8-7 8M12 1l7 8-7 8" fill="none" stroke="#47484c" stroke-width="2.800"/></svg>
 </div>
 <div class="edge"></div>

 <div class="site-page">
  <div class="bluebar"><div class="wrap h-100 d-flex align-items-center">
   <div class="logo">HugeDomaıns<svg width="28" height="21" viewBox="0 0 28 21"><path d="M0 9l3 3 5 3C15 10 20 4 27 0 20 6 14 13 11 21H8z" fill="#fff"/></svg></div>
   <div class="d-flex align-items-center ms-auto">
    <div class="sbox form-control"><svg width="44" height="44" viewBox="0 0 44 44" fill="none" stroke="#c9cacb"><circle cx="25" cy="17" r="15" stroke-width="3.500"/><path d="M15 29L1 43" stroke-width="5"/></svg></div>
    <button class="btn sbtn">Search</button><span class="phone text-nowrap">+1-303-893-0552</span>
   </div>
  </div></div>
  <nav class="graynav"><div class="wrap h-100 d-flex align-items-center">
   <a href="#">Home</a><i></i><a href="#">FAQs</a><i></i><a href="#">About us</a><i></i><a href="#">Contact us</a><i></i><a href="#">My account</a>
   <svg width="50" height="44" viewBox="0 0 50 44" class="ms-auto mt-1" fill="none" stroke="#9ba1ab" stroke-width="4"><path d="M25 41C10 28 2 22 2 13 2 2 18-2 25 10 32-2 48 2 48 13c0 9-8 15-23 28z"/></svg>
   <svg width="51" height="44" viewBox="0 0 51 44" class="cart mt-1" fill="none" stroke="#9ba1ab" stroke-width="4"><path d="M0 2h10l8 31h26M12 11h36l-4 17H16"/><circle cx="19" cy="39" r="3.800" stroke-width="3"/><circle cx="41" cy="39" r="3.800" stroke-width="3"/></svg>
  </div></nav>
  <div class="wrap">
   <h1 class="dom text-center">LinesAnd.com</h1>
   <p class="own text-center">Own this domain for as low as <b class="gr">$204</b> per month for <b class="gr">24</b> months</p>
   <div class="plans d-flex justify-content-center">
    <div class="card plan"><div class="lb">Pay it off quickly</div><div class="pr"><b class="gr">$816</b> / month</div><div class="mo">6 months</div><button class="btn sel">Select</button><div class="ap d-flex justify-content-between"><span>APR 0%</span><span>$0 interest</span></div></div>
    <div class="card plan"><div class="lb">12 easy payments</div><div class="pr"><b class="gr">$408</b> / month</div><div class="mo">12 months</div><button class="btn sel">Select</button><div class="ap d-flex justify-content-between"><span>APR 0%</span><span>$0 interest</span></div></div>
    <div class="card plan"><div class="lb">Most popular</div><div class="pr"><b class="gr">$204</b> / month</div><div class="mo">24 months</div><button class="btn sel">Select</button><div class="ap d-flex justify-content-between"><span>APR 0%</span><span>$0 interest</span></div></div>
   </div>
   <p class="note text-center">In most cases access to the domain will be available within one to two hours of purchase, however access to domains purchased after business hours will be available within the next business day. <a href="#">How this works.</a></p>
  </div>
  <div class="feats d-flex">
   <svg width="160" height="90" viewBox="905 1776 160 90" fill="none" stroke="#a7b4b9" stroke-width="6.500"><path d="M915 1870v-24c0-32 12-51 38.500-51s38.500 19 38.500 51v24M937.500 1870v-22c0-26 4-37 16-37s16 11 16 37v22"/><ellipse cx="1013" cy="1832" rx="9.500" ry="12.500" stroke-width="5.500"/><path d="M1048 1815l-30 52" stroke-width="6"/><ellipse cx="1046" cy="1862" rx="10" ry="12" stroke-width="5.500"/></svg>
   <svg width="135" height="90" viewBox="1480 1776 135 90" class="rocket"><g transform="translate(1470 1760)" fill="none" stroke="#abb5ba" stroke-width="5"><path d="M140 18.500C100 24 70 46 57 77l24 22C112 88 138 60 140 18.500z"/><circle cx="107.800" cy="49.500" r="10"/><path d="M67 56.500C45 53 22 62 15.500 79c11-9 29-9 41-3M57 77l-3 10 14 14M44 101c3-5 7-8 12-9M99 89l1.500 14"/></g></svg>
   <svg width="144" height="90" viewBox="1995 1776 144 90" class="nodoc"><g transform="translate(1470 1760)" fill="none" stroke="#adb6ba" stroke-width="8"><circle cx="597" cy="86" r="66"/><path d="M567.800 110V47.700h44L627 63.300V110M551 40l62 66" stroke-width="7"/><path d="M611 48v17.500h16" stroke-width="6"/><path d="M614 77l-26 27M581 93l8 9" stroke-width="6" stroke-linecap="round"/></g></svg>
  </div>
  <svg class="cookie" width="90" height="90" viewBox="0 0 90 90"><circle cx="45" cy="45" r="45" fill="#2156a1"/><g fill="none" stroke="#fff" stroke-width="4"><path d="M44 17.500A28 28 0 1 1 17 43c5 1 8-1 10-4 8 1 14-3 13-10 4-2 5-7 4-11.500z"/><path d="M39 44l6 9 11-17" stroke-width="5"/></g><g fill="#fff"><circle cx="30" cy="19" r="3.500"/><circle cx="19" cy="32" r="2.800"/><circle cx="29" cy="30" r="2.300"/><path d="M42.500 58h5v6h-5z"/></g></svg>
  <div class="chat d-flex justify-content-center"><svg width="74" height="51" viewBox="0 0 74 51" fill="none" stroke="#f2f2f2" stroke-width="2.600"><rect x="1.500" y="1.500" width="71" height="48"/><path d="M2 7l24 20q11 6 22 0L72 7M22 25L7 41M52 25l15 16"/></svg></div>
 </div>
</main>

<footer class="dock d-flex align-items-center">
 <span class="dk f on"><svg width="54" height="54" viewBox="0 0 54 54"><rect width="54" height="54" rx="12.500" fill="#e4e6ec"/><path d="M29 0H12.500Q0 0 0 12.500v29Q0 54 12.500 54H34c-2-7-2-14-2-22h-8c0-12 2-24 5-32z" fill="url(#gFi)"/><path d="M14 15v5M40 15v5M11 36q16 14 32 0M32 32h-8" fill="none" stroke="#16202c" stroke-width="2.200" stroke-linecap="round"/></svg></span>
 <span class="dk"><svg width="54" height="54" viewBox="0 0 54 54"><rect width="54" height="54" rx="12.500" fill="#c3c8cf"/><g><rect x="9" y="9" width="10" height="10" rx="2" fill="#6fdc55"/><rect x="22.500" y="9" width="10" height="10" rx="2" fill="#f2b233"/><rect x="35.500" y="9" width="10" height="10" rx="2" fill="#ee8a2c"/><rect x="9" y="22" width="10" height="10" rx="2" fill="#d1262a"/><rect x="22.500" y="22" width="10" height="10" rx="2" fill="#8c9298"/><rect x="35.500" y="22" width="10" height="10" rx="2" fill="#ec4a5c"/><rect x="9" y="35" width="10" height="10" rx="2" fill="#8b3fc8"/><rect x="22.500" y="35" width="10" height="10" rx="2" fill="#2f9bf0"/><rect x="35.500" y="35" width="10" height="10" rx="2" fill="#55cfae"/></g></svg></span>
 <span class="dk"></span>
 <span class="dk"><svg width="54" height="54" viewBox="0 0 54 54"><rect width="54" height="54" rx="12.500" fill="#fff"/><g opacity=".9"><ellipse cx="27" cy="14.500" rx="6.500" ry="11" fill="#f09a2d"/><ellipse cx="27" cy="14.500" rx="6.500" ry="11" fill="#efd23a" transform="rotate(45 27 27)"/><ellipse cx="27" cy="14.500" rx="6.500" ry="11" fill="#a3cf4b" transform="rotate(90 27 27)"/><ellipse cx="27" cy="14.500" rx="6.500" ry="11" fill="#63bd79" transform="rotate(135 27 27)"/><ellipse cx="27" cy="14.500" rx="6.500" ry="11" fill="#6fb1e6" transform="rotate(180 27 27)"/><ellipse cx="27" cy="14.500" rx="6.500" ry="11" fill="#8c86c9" transform="rotate(225 27 27)"/><ellipse cx="27" cy="14.500" rx="6.500" ry="11" fill="#c678ae" transform="rotate(270 27 27)"/><ellipse cx="27" cy="14.500" rx="6.500" ry="11" fill="#e8604a" transform="rotate(315 27 27)"/></g></svg></span>
 <span class="dk"><svg width="54" height="54" viewBox="0 0 54 54"><rect width="54" height="54" rx="12.500" fill="url(#gMu)"/><path d="M19 14l20-5v27M19 14v26M19 20l20-5" fill="none" stroke="#fff" stroke-width="3.600"/><ellipse cx="15.500" cy="40" rx="5.200" ry="4.500" fill="#fff"/><ellipse cx="35.500" cy="35.500" rx="5.200" ry="4.500" fill="#fff"/></svg></span>
 <span class="dk"><svg width="68" height="68" viewBox="0 0 68 68"><path d="M31 2q3-3 6 0l29 29q3 3 0 6L37 66q-3 3-6 0L2 37q-3-3 0-6z" fill="url(#gDi)"/><path d="M28 23v23l17-11.500z" fill="#fff"/></svg></span>
 <span class="dk"><svg width="54" height="54" viewBox="0 0 54 54"><rect width="54" height="54" rx="12.500" fill="#ece9f8"/><path d="M11 12h30l8 21q0 2-2 2H6q-2 0-2-2z" fill="url(#gPk)"/><path d="M20 37h15v7h2v2H17v-2h3z" fill="#a9b4dc"/><path d="M25 12q10 2 15 18M35 12q4 4 6 12" stroke="#f9dcf5" stroke-width="2" fill="none"/></svg></span>
 <span class="dk on"><svg width="54" height="54" viewBox="0 0 54 54"><rect width="54" height="54" rx="12.500" fill="#b7bec3"/><rect x="16" y="3" width="22" height="48" rx="4" fill="#1b2026"/><rect x="18" y="5" width="18" height="44" rx="3" fill="url(#gPh)"/><rect x="24" y="5" width="6" height="3" rx="1.500"/></svg></span>
 <span class="dk"><svg width="54" height="54" viewBox="0 0 54 54"><rect width="54" height="54" rx="12.500" fill="#d4d3cf"/><rect x="12" y="7" width="30" height="41" rx="5" fill="#232426"/><rect x="16" y="11" width="22" height="9" rx="2" fill="#55585a"/><g fill="#cfcfcf"><circle cx="19" cy="25.500" r="3"/><circle cx="27" cy="25.500" r="3"/><circle cx="19" cy="33.500" r="3"/><circle cx="27" cy="33.500" r="3"/><circle cx="19" cy="41.500" r="3"/><circle cx="27" cy="41.500" r="3"/></g><g fill="#f09336"><circle cx="35" cy="25.500" r="3"/><circle cx="35" cy="33.500" r="3"/><circle cx="35" cy="41.500" r="3"/></g></svg></span>
 <span class="dk on"><svg width="54" height="54" viewBox="0 0 54 54"><rect width="54" height="54" rx="12.500" fill="#f0eeea"/><path d="M0 14v-1.500Q0 0 12.500 0h29Q54 0 54 12.500V14z" fill="#f7cd46"/><path d="M0 16.500h54" stroke="#aaa" stroke-width="1" stroke-dasharray="1 2"/><path d="M0 27h54M0 40h54" stroke="#d8d6d2" stroke-width="1.500"/></svg></span>
 <span class="dk"><svg width="54" height="54" viewBox="0 0 54 54"><rect width="54" height="54" rx="12.500" fill="url(#gGn)"/><rect x="8" y="15" width="26" height="24" rx="6" fill="#f1f5f0"/><path d="M36 23l9-7v22l-9-7z" fill="#e3f1e0"/></svg></span>
 <span class="dk"></span>
 <span class="dk on"><svg width="54" height="54" viewBox="0 0 54 54"><rect width="54" height="54" rx="12.500" fill="#fff"/><circle cx="28" cy="14" r="5.500" fill="#7b83eb"/><circle cx="40" cy="16" r="4" fill="#5059c9"/><path d="M35 23h11v12q-1 7-9 6z" fill="#5059c9"/><path d="M18 23h20v13q-1 9-10 9t-10-9z" fill="#7b83eb"/><rect x="7" y="17" width="20" height="21" rx="2" fill="#4b53bc"/><path d="M12.500 22.500h9M17 22.500v11" stroke="#fff" stroke-width="2.600"/></svg></span>
 <span class="dk on"><svg width="54" height="54" viewBox="0 0 54 54"><rect width="54" height="54" rx="12.500" fill="#fff"/><path d="M9 29V20L28 8l18 12v9L28 39z" fill="none" stroke="#3c73b9" stroke-width="2.400"/><path d="M9 33v12h37V25" fill="none" stroke="#3c73b9" stroke-width="2.400"/><path d="M16 32v-8h23v8" fill="none" stroke="#efb450" stroke-width="2.600"/></svg></span>
 <span class="dk on"><svg width="54" height="54" viewBox="0 0 54 54"><rect width="54" height="54" rx="12.500" fill="url(#gGn)"/><path d="M8 46l3-10a20 19 0 1 1 8 7.500z" fill="none" stroke="#fff" stroke-width="3.600" stroke-linejoin="round"/><g transform="translate(14.500 13.500) scale(1.130)"><path fill="#fff" d="M5 4.500C6 3 8 3 8.600 4.300l1.500 3.500c.2.600-1 2-1.500 2.400.8 2.400 3.400 4.600 5.600 5.400.6-.4 1.700-2 2.300-1.800l3.400 1.700c.8.600 0 3.500-2 4.400-5 2.200-14-5-14.500-11C3.300 7 4 5.500 5 4.500z"/></g></svg><b class="bdg fw-medium">21</b></span>
 <span class="dk"><svg width="54" height="54" viewBox="0 0 54 54"><rect width="54" height="54" rx="12.500" fill="#fdfbf4"/><rect x="14" y="10" width="26" height="35" rx="3" fill="#35388a" transform="rotate(10 27 27)"/><rect x="15" y="9" width="25" height="36" rx="3" fill="#efcb5c"/><circle cx="28" cy="27" r="6" fill="#fff"/><text x="28" y="31" text-anchor="middle" font-size="11" font-weight="700" fill="#2f327e">$</text></svg></span>
 <span class="dk"></span>
 <span class="dk on"><svg width="54" height="54" viewBox="0 0 54 54"><rect width="54" height="54" rx="12.500" fill="#1a1b1d"/><path d="M10.500 15H44v24H15v-4.500h-4.500z" fill="#6ce892"/><path d="M15 19.500h25v15H15z" fill="#1a1b1d"/><circle cx="23" cy="27" r="2.600" fill="#6ce892"/><circle cx="33" cy="27" r="2.600" fill="#6ce892"/></svg></span>
 <span class="dk on"><svg width="54" height="54" viewBox="0 0 54 54"><rect width="54" height="54" rx="12.500" fill="#f7f7f7"/><path d="M27 27L6.500 15.500A23.500 23.500 0 0 1 48 16.500z" fill="#dd4b3e"/><path d="M27 27L6.700 15A23.500 23.500 0 0 0 26 50.500l10-17z" fill="#4fa457"/><path d="M27 16.500h21.300A23.500 23.500 0 0 1 26.500 50.500L36 33z" fill="#f7c544"/><circle cx="27" cy="27" r="11" fill="#fff"/><circle cx="27" cy="27" r="8.800" fill="#3f7de3"/></svg></span>
 <span class="dk"><svg width="54" height="54" viewBox="0 0 54 54"><rect width="54" height="54" rx="12.500" fill="#fafafb"/><path d="M12.500 21.500L27 10l14.500 11.500" fill="none" stroke="url(#gCu)" stroke-width="7.500"/><path d="M13 35q14 13 28 0" fill="none" stroke="url(#gCd)" stroke-width="7.500"/></svg></span>
 <span class="dk on text-white"><svg width="54" height="54" viewBox="0 0 54 54"><rect width="54" height="54" rx="12.500" fill="#cc7a5c"/><use href="#star12" x="7" y="7" width="40" height="40"/></svg></span>
 <span class="dk on"><svg width="54" height="54" viewBox="0 0 54 54"><rect width="54" height="54" rx="12.500" fill="#f0f4f9"/><use href="#oai" x="7" y="7" width="40" height="40"/></svg></span>
 <span class="dk"><svg width="54" height="54" viewBox="0 0 54 54"><rect width="54" height="54" rx="12.500" fill="#eeeff1"/><circle cx="27" cy="27" r="23" fill="#3c8fec"/><circle cx="27" cy="27" r="20" fill="none" stroke="#a9d3fb" stroke-width="2.500" stroke-dasharray="1 2.500"/><path d="M44 13L30 30l-6-6z" fill="#e2483c"/><path d="M12 41l12-17 6 6z" fill="#f4f4f4"/></svg></span>
 <span class="dk"></span>
 <span class="dk"><svg width="68" height="68" viewBox="0 0 68 68"><rect width="68" height="68" rx="14" fill="url(#gOr)"/><circle cx="34" cy="34" r="25" fill="none" stroke="#fff" stroke-width="2.400" stroke-dasharray="142 15" stroke-dashoffset="-3"/><rect x="21" y="24" width="20" height="20" rx="3" fill="#fff"/><path d="M40 33l8-8v18l-8-8z" fill="#fff"/><circle cx="31" cy="34" r="4" fill="#e8803a"/></svg></span>
 <span class="dk"><svg width="50" height="50" viewBox="0 0 50 50"><rect width="50" height="50" rx="11" fill="#03091c"/><path d="M14 36l10-24q1-2 3 0l10 22" fill="none" stroke="url(#gAe)" stroke-width="6" stroke-linecap="round" stroke-linejoin="round"/><path d="M15 35h7q3-3 2-8" fill="none" stroke="#5aa0fa" stroke-width="5"/></svg></span>
 <span class="dk"><svg width="54" height="54" viewBox="0 0 54 54"><rect width="54" height="54" rx="12.500" fill="#1d1d1d"/><path d="M27 8h-6a6.500 6.500 0 0 0 0 13h6z" fill="#e8412e"/><path d="M27 8h6.500a6.500 6.500 0 0 1 0 13H27z" fill="#ee6b3a"/><path d="M27 21h-6a6.500 6.500 0 0 0 0 13h6z" fill="#8a4df5"/><circle cx="33.500" cy="27.500" r="6.500" fill="#4fb3f8"/><path d="M27 34h-6a6.500 6.500 0 1 0 6 6.500z" fill="#45cb80"/></svg></span>
 <span class="dk"><svg width="54" height="54" viewBox="0 0 54 54"><rect width="54" height="54" rx="11" fill="#0a2036"/><text x="28" y="38" text-anchor="middle" font-size="32" font-weight="700" font-family="Open Sans" textLength="35" lengthAdjust="spacingAndGlyphs" fill="#4aa5f8">Ps</text></svg></span>
 <span class="dk"><svg width="54" height="54" viewBox="0 0 54 54"><rect width="54" height="54" rx="11" fill="#300602"/><text x="27" y="38" text-anchor="middle" font-size="32" font-weight="700" font-family="Open Sans" textLength="31" lengthAdjust="spacingAndGlyphs" fill="#f0973a">Ai</text></svg></span>
 <span class="dk"><svg width="54" height="54" viewBox="0 0 54 54"><rect width="54" height="54" rx="11" fill="#04045b"/><text x="29" y="38" text-anchor="middle" font-size="32" font-weight="700" font-family="Open Sans" textLength="33" lengthAdjust="spacingAndGlyphs" fill="#9c97f7">Pr</text></svg></span>
 <span class="dk fc"><svg width="56" height="60" viewBox="0 0 56 60"><rect x="1" y="16" width="54" height="43" rx="10" fill="#25272c"/><path d="M5 25h46v21q0 9-9 9H14q-9 0-9-9z" fill="#d8cf6a"/><path d="M5 25h23v15H5z" fill="#e9ef6a"/><path d="M28 25h23v15H28z" fill="#ea8076"/><path d="M28 40h23v6q0 9-9 9H28z" fill="#8f87ee"/><path d="M28 40H5v6q0 9 9 9h14z" fill="#86e29b"/><path d="M1 13h54v10H1z" fill="#ececec"/><path d="M7 13h8l-5 10H2zM23 13h8l-5 10h-8zM39 13h8l-5 10h-8z" fill="#333"/><path d="M1 9l50-10 3 8L3 17z" fill="#ececec"/><path d="M8 7.500l8-1.500 3 8-8 1.500zM24 4l8-1.500 3 8-8 1.500zM40 1l8-1.500 3 8-8 1.500z" fill="#333"/></svg></span>
 <span class="dk"><svg width="54" height="54" viewBox="0 0 54 54"><rect width="54" height="54" rx="12.500" fill="#333436"/><circle cx="33" cy="30" r="11.500" fill="none" stroke="#e58026" stroke-width="7"/><circle cx="33" cy="30" r="8" fill="#fff"/><circle cx="33" cy="30" r="5.800" fill="#265787"/><path d="M27 11l14 10M11 20h20M6 36l18-15" stroke="#e58026" stroke-width="4" stroke-linecap="round"/></svg></span>
 <span class="dk"><svg width="54" height="54" viewBox="0 0 54 54"><rect width="54" height="54" rx="12.500" fill="url(#gCc)"/><g fill="none" stroke="#fff" stroke-width="3.600"><path d="M18 41q-10-1-10-10t10-11q4-8 13-7 14 2 15 15t-12 13z"/><path d="M33 36q-7-8-10-11-5-4-9 1t1 9q4 3 8-1M20 22q6 5 10 11 5 4 9-1t-1-9q-4-3-8 1"/></g></svg></span>
 <span class="dk on"><svg width="54" height="54" viewBox="0 0 54 54"><rect width="54" height="54" rx="12.500" fill="#f8f7f5"/><path d="M19 10c-9 7-3 12-1 17v18" fill="none" stroke="#f0bf3e" stroke-width="4"/><path d="M25 10c-9 7-3 12-1 17v17" fill="none" stroke="#56b765" stroke-width="4"/><path d="M33 9a10 10 0 0 1 5 18v4l2 3-3 3 2 4-5 5-4-4V27a10 10 0 0 1 3-18z" fill="#3b8ef5"/><circle cx="33" cy="15" r="2.600" fill="#fff"/></svg></span>
 <i class="dsep wide"></i>
 <span class="dk"><svg width="54" height="54" viewBox="0 0 54 54"><rect width="54" height="54" rx="12.500" fill="#a32418"/><path d="M24 13c4-5 5 3 1 14-3 8-8 16-11 15s3-8 13-10 17 0 16 3-11-2-16-10c-4-6-5-9-3-12z" fill="none" stroke="#fff" stroke-width="2.600"/></svg></span>
 <span class="dk"><svg width="54" height="54" viewBox="0 0 54 54"><rect width="54" height="54" rx="12.500" fill="url(#gBl)"/><rect x="8" y="15" width="38" height="24" rx="3" fill="#f0f1f0"/><path d="M9 17l15 14q3 2 6 0l15-14M9 37l12-10M45 37L33 27" fill="none" stroke="#999d9e" stroke-width="1.500"/></svg></span>
 <span class="dk on"><svg width="54" height="54" viewBox="0 0 54 54"><rect width="54" height="54" rx="12.500" fill="#eff1f5"/><path d="M4 14q0-10 10-10h26q10 0 10 10v16H4z" fill="#9ab8ec"/><path d="M4 29h46v4H4z" fill="#23366b"/><path d="M4 33h46v7q0 10-10 10H14Q4 50 4 40z" fill="#7d99bb"/><path d="M4 37l9-2 8 5 7-2v12H14Q4 50 4 40z" fill="#e3e8ec"/><path d="M12 44l8 2 2 4h-8q-4 0-6-3z" fill="#6b5a4c"/><path d="M27 30q0-4 4-4h17q4 0 4 4v8H27z" fill="#141414"/><path d="M29 38h21l5 16q0 2-2 2H26q-2 0-2-2z" fill="#dfe2e4"/><path d="M33 41h12v10H33z" fill="#9fb0bd"/></svg></span>
 <i class="dsep"></i>
 <span class="dk"><svg width="50" height="62" viewBox="0 0 50 62"><path d="M2 8h46l-5 46q-1 8-9 8H16q-8 0-9-8z" fill="url(#gTr)"/><path d="M2 10L8 1l6 4 5-5 7 5 8-4 6 4 5-1 3 9-22 5z" fill="#efefee"/><path d="M10 6l5 4M20 4l4 6 4-4M33 4l3 6 5-3M14 12h6" stroke="#555b60" stroke-width="3"/><path d="M30 9l6 2" stroke="#c2543a" stroke-width="3"/><path d="M18 10l5 1" stroke="#4fb8a9" stroke-width="3"/></svg></span>
</footer>
</body>
</html>
